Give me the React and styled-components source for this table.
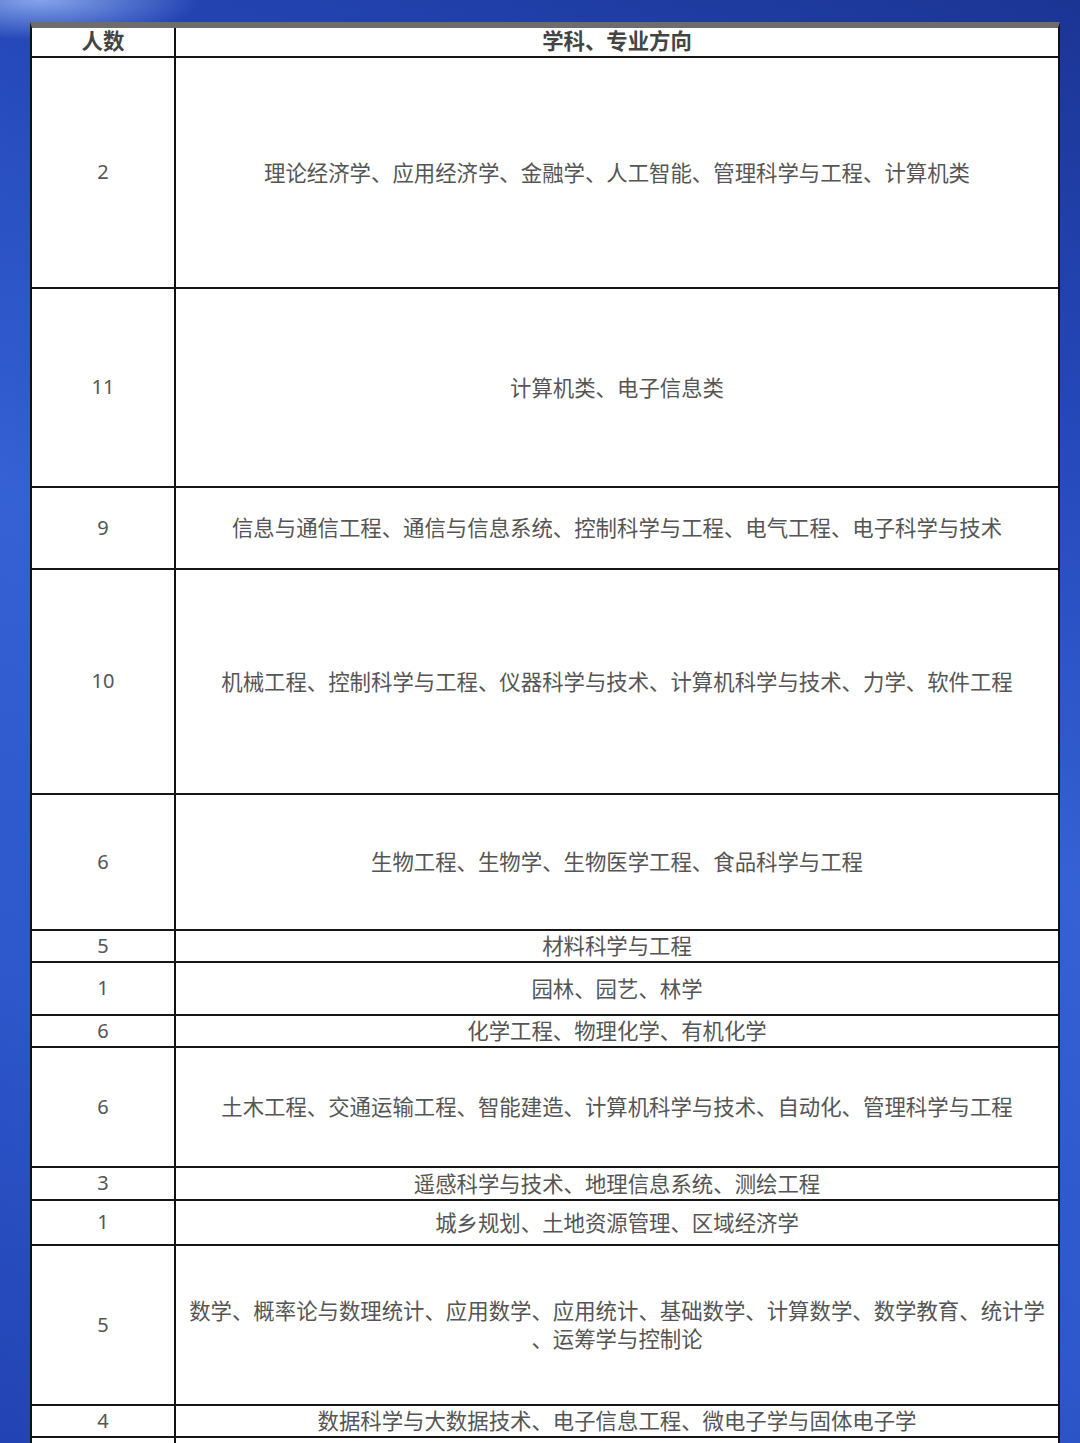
import React from "react";
import styled, { createGlobalStyle } from "styled-components";

const GlobalStyle = createGlobalStyle`
  html, body {
    margin: 0;
    padding: 0;
    height: 1443px;
    overflow: hidden;
  }
  body {
    font-family: "Noto Sans", "Noto Sans CJK SC", sans-serif;
    background:
      radial-gradient(ellipse 160px 40px at 40px 0px, #86a4ea 0%, rgba(134, 164, 234, 0) 100%),
      linear-gradient(200deg, #1b3594 0%, #2447b8 22%, #3461d3 48%, #2d57ca 75%, #2243b4 100%);
  }
`;

const Page = styled.div`
  padding: 22px 20px 0 30px;
`;

const Table = styled.div`
  width: 1030px;
  box-sizing: border-box;
  background: #ffffff;
  border-top: 6px solid #6d6d6d;
  border-left: 2px solid #111111;
  border-right: 2px solid #111111;
  display: flex;
  flex-direction: column;
`;

const Row = styled.div`
  display: grid;
  grid-template-columns: 144px 1fr;
  box-sizing: border-box;
  height: ${(p) => p.$h}px;
  border-bottom: 2px solid #161616;
`;

const CountCell = styled.div`
  display: flex;
  align-items: center;
  justify-content: center;
  box-sizing: border-box;
  border-right: 2px solid #111111;
  padding-bottom: ${(p) => (p.$head ? 5 : 1)}px;
  font-size: 20px;
  line-height: 24px;
  color: ${(p) => (p.$head ? "#444444" : "#555555")};
  font-weight: ${(p) => (p.$head ? 700 : 400)};
  ${(p) => p.$head && "font-family: 'Noto Sans CJK SC', sans-serif; font-size: 21.4px;"}
`;

const FieldCell = styled.div`
  display: flex;
  align-items: center;
  justify-content: center;
  box-sizing: border-box;
  text-align: center;
  padding: 0 12px ${(p) => (p.$head ? 5 : 2)}px;
  font-family: "Noto Sans CJK SC", sans-serif;
  font-size: 21.4px;
  line-height: ${(p) => (p.$head ? 24 : 28)}px;
  color: ${(p) => (p.$head ? "#444444" : "#555555")};
  font-weight: ${(p) => (p.$head ? 700 : 400)};
`;

const rows = [
  { n: "2", h: 231, t: ["理论经济学、应用经济学、金融学、人工智能、管理科学与工程、计算机类"] },
  { n: "11", h: 199, t: ["计算机类、电子信息类"] },
  { n: "9", h: 82, t: ["信息与通信工程、通信与信息系统、控制科学与工程、电气工程、电子科学与技术"] },
  { n: "10", h: 225, t: ["机械工程、控制科学与工程、仪器科学与技术、计算机科学与技术、力学、软件工程"] },
  { n: "6", h: 136, t: ["生物工程、生物学、生物医学工程、食品科学与工程"] },
  { n: "5", h: 32, t: ["材料科学与工程"] },
  { n: "1", h: 53, t: ["园林、园艺、林学"] },
  { n: "6", h: 32, t: ["化学工程、物理化学、有机化学"] },
  { n: "6", h: 120, t: ["土木工程、交通运输工程、智能建造、计算机科学与技术、自动化、管理科学与工程"] },
  { n: "3", h: 33, t: ["遥感科学与技术、地理信息系统、测绘工程"] },
  { n: "1", h: 45, t: ["城乡规划、土地资源管理、区域经济学"] },
  {
    n: "5",
    h: 160,
    t: [
      "数学、概率论与数理统计、应用数学、应用统计、基础数学、计算数学、数学教育、统计学",
      "、运筹学与控制论",
    ],
  },
  { n: "4", h: 32, t: ["数据科学与大数据技术、电子信息工程、微电子学与固体电子学"] },
  { n: "", h: 40, t: [""] },
];

export default function App() {
  return (
    <>
      <GlobalStyle />
      <Page>
        <Table>
          <Row $h={30}>
            <CountCell $head>人数</CountCell>
            <FieldCell $head>学科、专业方向</FieldCell>
          </Row>
          {rows.map((r, i) => (
            <Row key={i} $h={r.h}>
              <CountCell>{r.n}</CountCell>
              <FieldCell>
                <div>
                  {r.t.map((line, j) => (
                    <React.Fragment key={j}>
                      {j > 0 && <br />}
                      {line}
                    </React.Fragment>
                  ))}
                </div>
              </FieldCell>
            </Row>
          ))}
        </Table>
      </Page>
    </>
  );
}
